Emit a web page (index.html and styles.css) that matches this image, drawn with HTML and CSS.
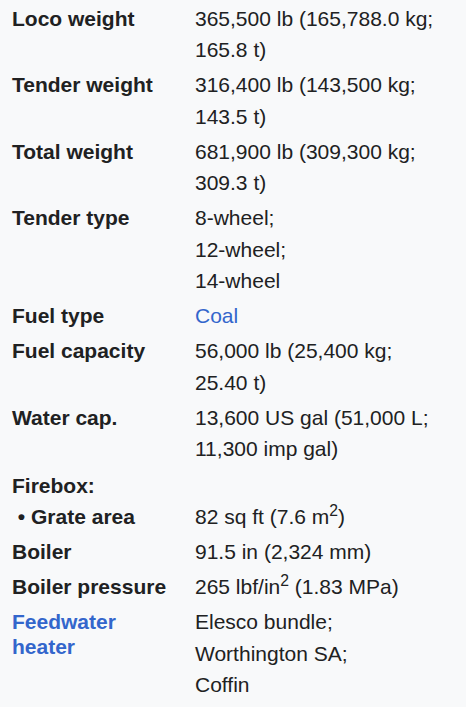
FILE: index.html
```html
<!DOCTYPE html>
<html lang="en">
<head>
<meta charset="utf-8">
<title>Infobox</title>
<link rel="stylesheet" href="styles.css">
</head>
<body>
<div class="infobox">
  <div class="row"><div class="label">Loco weight</div><div class="value">365,500&nbsp;lb (165,788.0&nbsp;kg; 165.8&nbsp;t)</div></div>
  <div class="row"><div class="label">Tender weight</div><div class="value">316,400&nbsp;lb (143,500&nbsp;kg; 143.5&nbsp;t)</div></div>
  <div class="row"><div class="label">Total weight</div><div class="value">681,900&nbsp;lb (309,300&nbsp;kg; 309.3&nbsp;t)</div></div>
  <div class="row"><div class="label">Tender type</div><div class="value">8-wheel;<br>12-wheel;<br>14-wheel</div></div>
  <div class="row"><div class="label">Fuel type</div><div class="value"><a class="link" href="#">Coal</a></div></div>
  <div class="row"><div class="label">Fuel capacity</div><div class="value">56,000&nbsp;lb (25,400&nbsp;kg; 25.40&nbsp;t)</div></div>
  <div class="row"><div class="label">Water cap.</div><div class="value">13,600&nbsp;US&nbsp;gal (51,000&nbsp;L; 11,300&nbsp;imp&nbsp;gal)</div></div>
  <div class="row row-sub"><div class="label">Firebox:</div><div class="value"></div></div>
  <div class="row"><div class="label">&nbsp;•&nbsp;Grate area</div><div class="value">82&nbsp;sq&nbsp;ft (7.6&nbsp;m<sup>2</sup>)</div></div>
  <div class="row"><div class="label">Boiler</div><div class="value">91.5&nbsp;in (2,324&nbsp;mm)</div></div>
  <div class="row"><div class="label">Boiler pressure</div><div class="value">265&nbsp;lbf/in<sup>2</sup> (1.83&nbsp;MPa)</div></div>
  <div class="row"><div class="label"><a class="link" href="#">Feedwater heater</a></div><div class="value">Elesco bundle;<br>Worthington SA;<br>Coffin</div></div>
</div>
</body>
</html>
```

FILE: styles.css
```css
html, body {
  margin: 0;
  padding: 0;
  background: #f8f9fa;
}

body {
  font-family: "Liberation Sans", Arial, sans-serif;
  font-size: 21px;
  color: #202122;
}

.infobox {
  padding: 1px 0 0 12px;
}

.row {
  display: grid;
  grid-template-columns: 160px 1fr;
  column-gap: 23px;
  align-items: first baseline;
  padding: 1.75px 0;
}

.row-sub {
  padding-top: 6.25px;
}

.label {
  font-weight: bold;
  line-height: 25px;
}

.value {
  line-height: 31.5px;
  padding-right: 6px;
}

.link {
  color: #3366cc;
  text-decoration: none;
}

sup {
  font-size: 0.75em;
  line-height: 1;
}
```
